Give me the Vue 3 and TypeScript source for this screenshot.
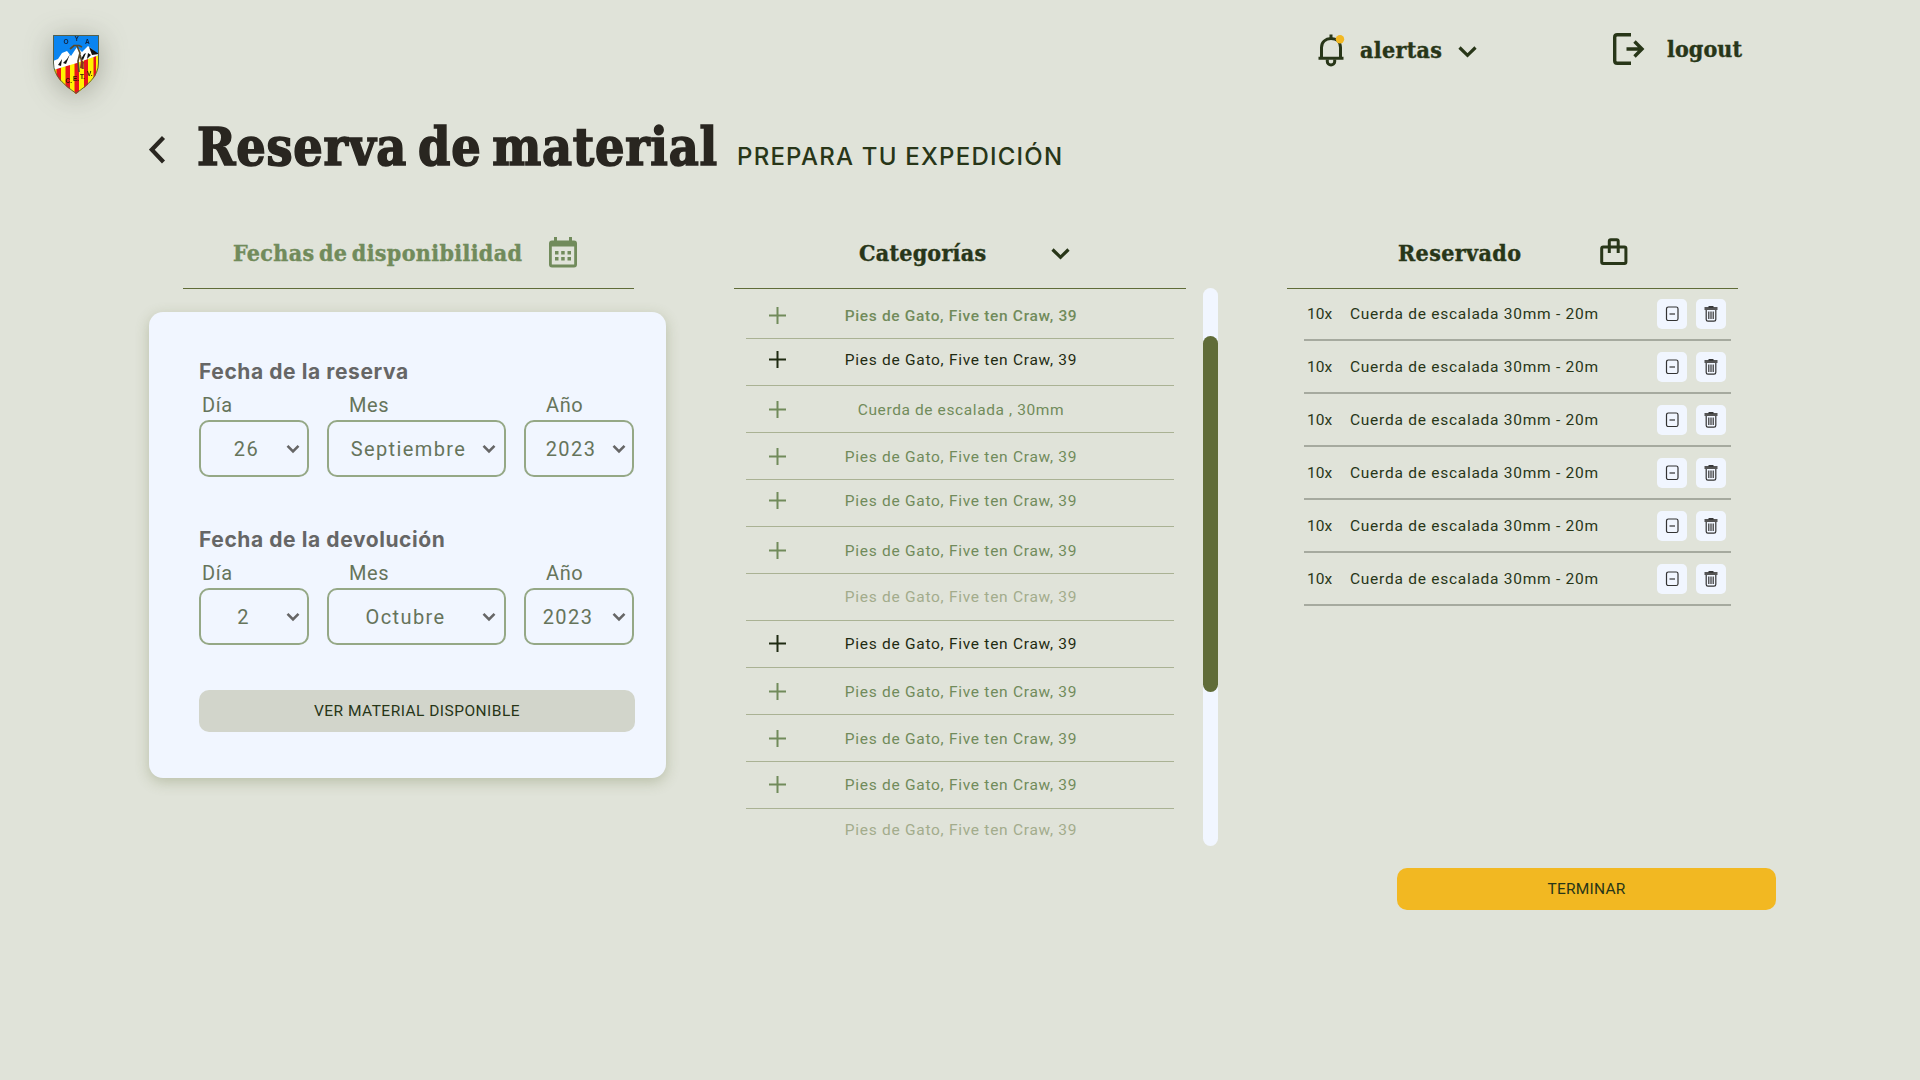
<script setup lang="ts">
interface Item { name: string; tone: string; pad: number; plus: boolean }
interface Booking { title: string; day: string; month: string; year: string; kind: string }

const shoes = 'Pies de Gato, Five ten Craw, 39'
const items: Item[] = [
  { name: shoes, tone: 'strong', pad: 16, plus: true },
  { name: shoes, tone: 'dark', pad: 11, plus: true },
  { name: 'Cuerda de escalada , 30mm', tone: 'green rope', pad: 14, plus: true },
  { name: shoes, tone: 'green', pad: 14, plus: true },
  { name: shoes, tone: 'green', pad: 11, plus: true },
  { name: shoes, tone: 'green', pad: 14, plus: true },
  { name: shoes, tone: 'muted', pad: 13, plus: false },
  { name: shoes, tone: 'dark', pad: 13, plus: true },
  { name: shoes, tone: 'green', pad: 14, plus: true },
  { name: shoes, tone: 'green', pad: 14, plus: true },
  { name: shoes, tone: 'green', pad: 13, plus: true },
  { name: shoes, tone: 'muted', pad: 11, plus: false },
]
const bookings: Booking[] = [
  { title: 'Fecha de la reserva', day: '26', month: 'Septiembre', year: '2023', kind: 'pickup' },
  { title: 'Fecha de la devolución', day: '2', month: 'Octubre', year: '2023', kind: 'return' },
]
</script>

<template>
  <div class="page">
    <header class="top">
      <svg class="crest" width="46" height="59" viewBox="0 0 46 59">
        <defs><clipPath id="shield"><path d="M0 0H46V28C46 42 34 51 23 59C12 51 0 42 0 28Z" /></clipPath></defs>
        <g clip-path="url(#shield)">
          <rect width="46" height="59" fill="#fff200" />
          <path d="M3.500 0H8V59H3.500zM12.500 0H17V59H12.500zM21.500 0H26V59H21.500zM31 0H35V59H31zM40.500 0H43V59H40.500z" fill="#e8151b" />
          <path d="M0 0H46V20L0 35Z" fill="#0a84f0" />
          <path d="M0 26L5 24L9 18L14 16L18 21L24 12L29 17L35 11L40 15L46 20L24 28L0 35Z" fill="#fff" />
          <path d="M5 30L9 24L8 31ZM13 29L17 19L14 24L10 28ZM30 25L33 18L31 19L28 24ZM36 12L46 19L39 20ZM34 24L38 20L35 18Z" fill="#111" />
          <path d="M17 14L21 10.500L26 10.500L29 12M24 11L27 18L25 26L26 37M27 20L29 27L30 34" fill="none" stroke="#5a4a2a" stroke-width="1.700" />
          <path d="M28 25L31 27L30 34L27 33Z" fill="#8a3020" />
        </g>
        <path d="M.5.5H45.500V28C45.500 41.500 34 50.500 23 58.300C12 50.500.5 41.500.5 28Z" fill="none" stroke="#56604a" />
        <g class="crest-text" fill="#15233c">
          <text x="10.500" y="9">O</text><text x="21.500" y="6">Y</text><text x="32" y="9">A</text>
        </g>
        <g class="crest-text" fill="#2a1500">
          <text x="12.500" y="48">C.</text><text x="20" y="46">E.</text><text x="27" y="43.500">T.</text><text x="34" y="41">V.</text>
        </g>
      </svg>
      <div class="alerts">
        <svg width="28" height="34" viewBox="0 0 28 34" fill="none" stroke="#283618">
          <path d="M1.500 25.300H26.500M4.500 25V14.500C4.500 9 8.500 5.600 14 5.600S23.500 9 23.500 14.500V25" stroke-width="3" />
          <path d="M14 1.500V6" stroke-width="3" />
          <path d="M10.300 26.500V28.500A3.700 3.400 0 0 0 17.700 28.500V26.500" stroke-width="3" />
          <circle cx="23" cy="6.200" r="4.200" fill="#f2b822" stroke="none" />
        </svg>
        <span class="serif t-alertas">alertas</span>
        <svg class="chev" width="19" height="12" viewBox="0 0 19 12"><path d="M1.500 1.500L9.500 9.300L17.500 1.500" fill="none" stroke="#283618" stroke-width="3.200" /></svg>
      </div>
      <div class="logout">
        <svg width="32" height="32" viewBox="0 0 32 32" fill="none" stroke="#283618" stroke-width="3.400">
          <path d="M18 1.700H4.200Q1.700 1.700 1.700 4.200V27.800Q1.700 30.300 4.200 30.300H18M13.500 16H29M21.500 8.500L29 16L21.500 23.500" />
        </svg>
        <span class="serif t-logout">logout</span>
      </div>
    </header>

    <div class="heading">
      <svg class="back" width="17" height="28" viewBox="0 0 17 28"><path d="M14.500 1.500L2.800 13.700L14.500 26" fill="none" stroke="#292620" stroke-width="4.200" /></svg>
      <h1>Reserva de material</h1>
      <span class="subtitle">PREPARA TU EXPEDICIÓN</span>
    </div>

    <main class="columns">
      <section class="dates">
        <div class="head head-dates">
          <span class="h-dates">Fechas de disponibilidad</span>
          <svg class="cal" width="28" height="31" viewBox="0 0 28 31" fill="#718b5b">
            <path fill-rule="evenodd" d="M5 0H8V3.500H20V0H23V3.500H25Q28 3.500 28 6.500V27.500Q28 30.500 25 30.500H3Q0 30.500 0 27.500V6.500Q0 3.500 3 3.500H5ZM2.800 9.500V27.500H25.200V9.500Z" />
            <path d="M6 14h3.500v3.500H6zM12.200 14h3.500v3.500h-3.500zM18.500 14H22v3.500h-3.500zM6 20h3.500v3.500H6zM12.200 20h3.500v3.500h-3.500zM18.500 20H22v3.500h-3.500z" />
          </svg>
        </div>
        <div class="card">
          <div v-for="b in bookings" :key="b.title" class="block" :class="b.kind">
            <div class="block-title">{{ b.title }}</div>
            <div class="fields">
              <div class="field day"><label>Día</label><div class="box"><span>{{ b.day }}</span>
                <svg width="14" height="10" viewBox="0 0 14 10"><path d="M1.500 1.800L7 7.300L12.500 1.800" /></svg></div></div>
              <div class="field month"><label>Mes</label><div class="box"><span>{{ b.month }}</span>
                <svg width="14" height="10" viewBox="0 0 14 10"><path d="M1.500 1.800L7 7.300L12.500 1.800" /></svg></div></div>
              <div class="field year"><label>Año</label><div class="box"><span>{{ b.year }}</span>
                <svg width="14" height="10" viewBox="0 0 14 10"><path d="M1.500 1.800L7 7.300L12.500 1.800" /></svg></div></div>
            </div>
          </div>
          <button class="ver"><span>VER MATERIAL DISPONIBLE</span></button>
        </div>
      </section>

      <section class="cats">
        <div class="cats-main">
          <div class="head head-cats">
            <span class="h-cats">Categorías</span>
            <svg class="chev2" width="19" height="12" viewBox="0 0 19 12"><path d="M1.500 1.500L9.500 9.300L17.500 1.500" fill="none" stroke="#283618" stroke-width="3.200" /></svg>
          </div>
          <ul>
            <li v-for="(it, i) in items" :key="i" :class="it.tone" :style="{ paddingTop: it.pad + 'px' }">
              <span class="plus"><svg v-if="it.plus" width="17" height="17" viewBox="0 0 17 17"><path d="M8.500 0V17M0 8.500H17" stroke="currentColor" stroke-width="2" /></svg></span>
              <span class="name">{{ it.name }}</span>
            </li>
          </ul>
        </div>
        <div class="track"><div class="thumb"></div></div>
      </section>

      <section class="reserved">
        <div class="head head-res">
          <span class="h-res">Reservado</span>
          <svg class="bag" width="28" height="28" viewBox="0 0 28 28" fill="none" stroke="#283618" stroke-width="3">
            <rect x="1.700" y="9" width="24.200" height="16.500" rx="1.500" /><path d="M9.300 15V3.200Q9.300 1.700 10.800 1.700H16.700Q18.200 1.700 18.200 3.200V15" />
          </svg>
        </div>
        <div v-for="n in 6" :key="n" class="row">
          <span class="qty">10x</span><span class="desc">Cuerda de escalada 30mm - 20m</span>
          <span class="btn"><svg width="14" height="16" viewBox="0 0 14 16" fill="none" stroke="#333"><rect x="1.500" y="1" width="11.500" height="13.500" rx="1.800" stroke-width="1.200" /><path d="M4.500 8H10" stroke-width="1.200" /></svg></span>
          <span class="btn"><svg width="14" height="16" viewBox="0 0 14 16" fill="none" stroke="#333"><path d="M.5 2.500H13.500" stroke="#555" stroke-width="3" /><path d="M4.500.8H9.500" stroke="#222" stroke-width="1.400" /><path d="M2.200 4V13.500Q2.200 15.200 4 15.200H10Q11.800 15.200 11.800 13.500V4M4.800 5.500V13M7 5.500V13M9.200 5.500V13" stroke-width="1.200" /></svg></span>
        </div>
      </section>
    </main>
    <button class="end"><span>TERMINAR</span></button>
  </div>
</template>

<style>
body { background: #e0e3d9; }
</style>
<style scoped>
.page { width: 1920px; height: 1080px; overflow: hidden; background: #e0e3d9; font-family: Roboto, sans-serif; color: #283618; white-space: nowrap; }
.top { display: flex; align-items: flex-start; height: 118px; padding-left: 53px; box-sizing: border-box; }
.crest { margin-top: 35px; flex: none; overflow: visible; filter: drop-shadow(0 4px 14px rgba(60, 64, 45, .35)); }
.crest-text { font: bold 6.500px "Liberation Sans", sans-serif; }
.alerts { display: flex; align-items: center; width: 295px; margin: 33px 0 0 1218px; }
.serif, h1, .head { font-family: "DejaVu Serif Condensed", "DejaVu Serif", serif; font-stretch: condensed; font-weight: 700; -webkit-text-stroke: .4px currentColor; }
.serif { font-size: 23px; line-height: 34px; }
.t-alertas { width: 82px; margin: 0 16px 0 15px; letter-spacing: .34px; }
.chev { margin-top: 4px; }
.logout { display: flex; align-items: center; gap: 22px; margin: 32px 0 0 1px; }
.t-logout { letter-spacing: .1px; }
.heading { display: flex; align-items: baseline; height: 112px; padding-left: 149px; box-sizing: border-box; }
.back { align-self: flex-start; margin: 18px 32px 0 0; }
h1 { width: 519px; margin: 0 21px 0 -1px; font-size: 51.500px; line-height: 58px; letter-spacing: .75px; word-spacing: -6px; color: #292620; -webkit-text-stroke-width: 1.500px; }
.subtitle { font-family: Inter, Roboto, sans-serif; font-size: 24px; font-weight: 500; letter-spacing: 1.230px; }
.columns { display: flex; align-items: flex-start; height: 616px; padding-left: 149px; }
.head { display: flex; align-items: flex-start; height: 59px; box-sizing: border-box; border-bottom: 1px solid #606c38; font-size: 23px; line-height: 45px; }
.dates { width: 517px; margin-right: 68px; }
.head-dates { margin: 0 32px 0 34px; padding-left: 50px; color: #718b5b; }
.h-dates { width: 289px; letter-spacing: .350px; word-spacing: -3px; }
.cal { margin: 7px 0 0 27px; }
.card { height: 466px; margin-top: 23px; padding: 50px 31px 0 50px; box-sizing: border-box; border-radius: 14px; background: #f1f6ff; box-shadow: 0 4px 14px rgba(96, 108, 56, .3); }
.block { height: 168px; }
.block-title { font-family: Inter, Roboto, sans-serif; font-size: 21px; font-weight: 700; line-height: 20px; letter-spacing: .580px; color: #666; }
.fields { display: flex; justify-content: space-between; width: 435px; margin-top: 12px; }
.field label { display: block; font-size: 20px; line-height: 22px; color: #66745b; margin-bottom: 4px; letter-spacing: .6px; }
.day label { padding-left: 3px; }
.month label, .year label { padding-left: 22px; }
.box { display: flex; align-items: center; height: 57px; padding-right: 8px; box-sizing: border-box; border: 2px solid #95a886; border-radius: 10px; font-size: 20px; letter-spacing: 1.400px; color: #66745b; }
.box span { flex: 1; text-align: center; }
.pickup .box span { text-indent: 6px; }
.pickup .year .box span { text-indent: 4px; }
.return .year .box span { margin-left: -2px; }
.box svg { fill: none; stroke: #666; stroke-width: 2.600; }
.day .box { padding-right: 7px; }
.year .box { padding-right: 6px; }
.day { width: 110px; }
.month { width: 179px; }
.year { width: 110px; }
button { border: 0; border-radius: 10px; font-family: inherit; font-size: 15.500px; height: 42px; color: #283618; padding: 0; display: block; }
.ver { width: 436px; background: #d2d5cb; margin-top: -8px; letter-spacing: .47px; }
.cats { display: flex; width: 484px; margin-right: 69px; }
.cats-main { width: 452px; }
.head-cats { padding-left: 125px; }
.h-cats { width: 127px; letter-spacing: .26px; }
.chev2 { margin: 18px 0 0 65px; }
ul { list-style: none; margin: 0; padding: 2px 12px 0; }
li { display: flex; height: 47px; box-sizing: border-box; border-bottom: 1px solid #aab294; font-size: 15.500px; line-height: 20px; letter-spacing: .72px; }
li:first-child { height: 49px; margin-top: -1px; }
li:last-child { border-bottom: 0; }
.plus { width: 17px; margin-left: 23px; padding-top: 1px; }
.plus svg { display: block; }
.name { width: 234px; margin-left: 58px; text-align: center; }
.strong { color: #718b5b; font-weight: 500; letter-spacing: .66px; }
.green { color: #718b5b; }
.dark { color: #1f2b12; }
.muted { color: #a3ac8c; }
.rope { letter-spacing: .61px; }
.track { width: 15px; height: 558px; margin: 58px 0 0 17px; border-radius: 8px; background: #f1f6ff; padding-top: 48px; box-sizing: border-box; }
.thumb { height: 356px; border-radius: 8px; background: #606c38; }
.reserved { width: 451px; }
.head-res { padding-left: 111px; }
.h-res { width: 123px; letter-spacing: .4px; }
.bag { margin: 8px 0 0 79px; }
.row { display: flex; align-items: center; height: 53px; margin: 0 7px 0 17px; padding: 1px 0 0 3px; box-sizing: border-box; border-bottom: 2px solid #a6aa9f; font-size: 15.500px; }
.row > * { flex: none; }
.head + .row { height: 52px; padding-top: 0; }
.qty { width: 43px; }
.desc { width: 250px; margin-right: 57px; letter-spacing: .74px; }
.btn { display: flex; align-items: center; justify-content: center; width: 30px; height: 30px; border-radius: 5px; background: #f1f6ff; margin-right: 9px; }
.end { width: 379px; margin: 22px 0 0 1397px; background: #f2b822; letter-spacing: .25px; }
</style>
